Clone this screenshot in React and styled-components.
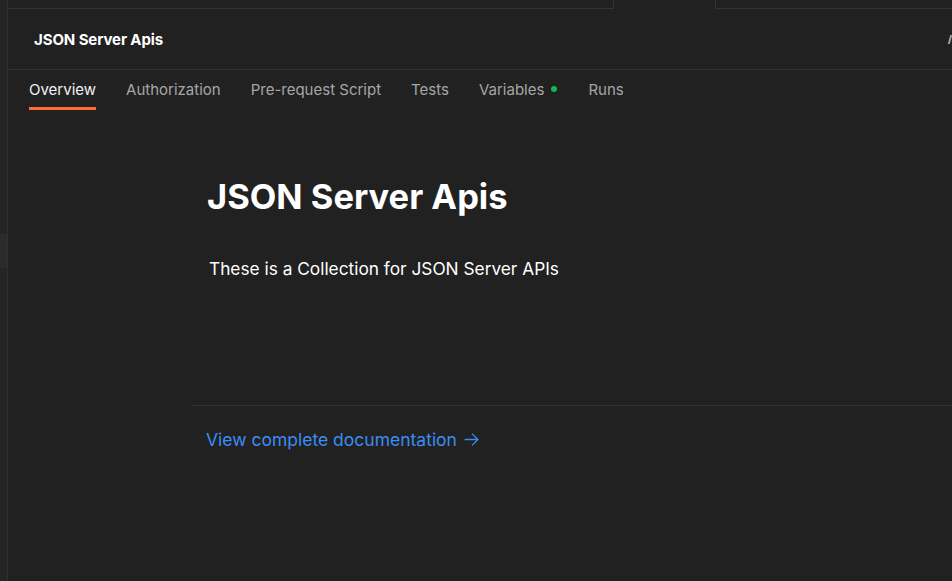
import React from "react";
import styled, { createGlobalStyle } from "styled-components";

const Global = createGlobalStyle`
  html, body {
    margin: 0;
    padding: 0;
    background: #212121;
  }
  body {
    font-family: Inter, "Noto Sans", sans-serif;
    -webkit-font-smoothing: antialiased;
  }
`;

const Page = styled.div`
  display: flex;
  width: 952px;
  height: 581px;
  overflow: hidden;
  background: #212121;
`;

const Rail = styled.div`
  width: 8px;
  flex-shrink: 0;
  background: #252525;
  border-right: 1px solid #303030;
  padding-top: 234px;
  box-sizing: border-box;
`;

const RailItem = styled.div`
  height: 34px;
  background: #2c2c2c;
`;

const Main = styled.div`
  flex: 1;
  display: flex;
  flex-direction: column;
  min-width: 0;
`;

const TabStrip = styled.div`
  display: flex;
  height: 9px;
  flex-shrink: 0;
`;

const TabSlot = styled.div`
  box-sizing: border-box;
  width: ${(p) => p.width || "auto"};
  flex: ${(p) => (p.grow ? 1 : "none")};
  border-bottom: ${(p) => (p.active ? "none" : "1px solid #333")};
  border-left: ${(p) => (p.edgeLeft ? "1px solid #333" : "none")};
  border-right: ${(p) => (p.edgeRight ? "1px solid #333" : "none")};
`;

const Header = styled.div`
  height: 61px;
  box-sizing: border-box;
  display: flex;
  align-items: center;
  justify-content: space-between;
  padding-left: 26px;
  border-bottom: 1px solid #333;
  flex-shrink: 0;
  overflow: hidden;
`;

const HeaderTitle = styled.div`
  color: #ffffff;
  font-size: 15px;
  font-weight: 700;
  letter-spacing: -0.1px;
`;

const HeaderEdge = styled.div`
  width: 3px;
  height: 9px;
  border-left: 2px solid #a0a0a0;
  box-sizing: border-box;
  transform: skewX(-15deg);
`;

const Tabs = styled.nav`
  display: flex;
  gap: 30px;
  padding-left: 21px;
  height: 42px;
  flex-shrink: 0;
`;

const Tab = styled.div`
  display: flex;
  align-items: center;
  gap: 7px;
  height: 40px;
  font-size: 15px;
  color: ${(p) => (p.active ? "#f2f2f2" : "#a6a6a6")};
  border-bottom: 3px solid ${(p) => (p.active ? "#ff6c37" : "transparent")};
  padding-top: 1px;
  box-sizing: border-box;
`;

const Dot = styled.span`
  width: 6px;
  height: 6px;
  border-radius: 50%;
  background: #0cbb52;
  margin-right: 1px;
`;

const Content = styled.div`
  padding-left: 183px;
  padding-top: 64px;
`;

const Section = styled.div`
  padding-left: 16px;
`;

const Title = styled.h1`
  margin: 0;
  color: #ffffff;
  font-size: 34.5px;
  font-weight: 700;
  line-height: 42px;
`;

const Description = styled.p`
  margin: 39px 0 0 2px;
  color: #ffffff;
  font-size: 17.3px;
  line-height: 24px;
`;

const Divider = styled.div`
  margin-top: 124px;
  height: 1px;
  background: #333;
`;

const DocLink = styled.a`
  display: inline-flex;
  align-items: center;
  gap: 6px;
  margin: 23px 0 0 15px;
  color: #3b8cf5;
  font-size: 17.5px;
  text-decoration: none;
  cursor: pointer;
`;

const tabs = [
  { label: "Overview", active: true },
  { label: "Authorization" },
  { label: "Pre-request Script" },
  { label: "Tests" },
  { label: "Variables", dot: true },
  { label: "Runs" },
];

export default function App() {
  return (
    <>
      <Global />
      <Page>
        <Rail>
          <RailItem />
        </Rail>
        <Main>
          <TabStrip>
            <TabSlot width="606px" edgeRight />
            <TabSlot width="101px" active />
            <TabSlot grow edgeLeft />
          </TabStrip>
          <Header>
            <HeaderTitle>JSON Server Apis</HeaderTitle>
            <HeaderEdge />
          </Header>
          <Tabs>
            {tabs.map((t) => (
              <Tab key={t.label} active={t.active}>
                {t.label}
                {t.dot && <Dot />}
              </Tab>
            ))}
          </Tabs>
          <Content>
            <Section>
              <Title>JSON Server Apis</Title>
              <Description>These is a Collection for JSON Server APIs</Description>
            </Section>
            <Divider />
            <DocLink>
              View complete documentation
              <svg width="17" height="17" viewBox="0 0 16 16" fill="none" stroke="currentColor" strokeWidth="1.2">
                <path d="M1.5 8h12.5M8.5 2.5 14 8l-5.5 5.5" />
              </svg>
            </DocLink>
          </Content>
        </Main>
      </Page>
    </>
  );
}
